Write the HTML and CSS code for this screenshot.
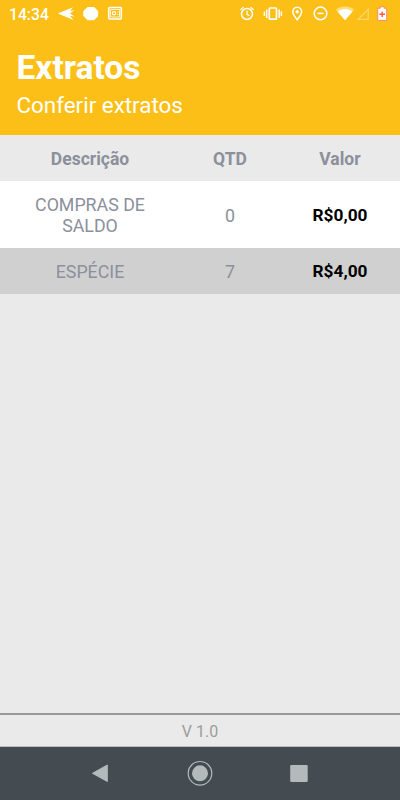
FILE: index.html
```html
<!DOCTYPE html>
<html lang="pt-BR">
<head>
<meta charset="utf-8">
<title>Extratos</title>
<link rel="stylesheet" href="styles.css">
</head>
<body>
<div class="app">
  <header class="header">
    <div class="status">
      <span class="clock">14:34</span>
      <svg class="status-icons" width="80" height="28" viewBox="50 0 80 28" fill="#fff">
        <path d="M57.800 13.500 73 7.200l-3 4 4.500-1.200-4.500 3.500 4.500 3-4.500-.8 3.500 4.200z"/>
        <path d="M87.500 7.500h6.500l3.700 3.500v5l-3.700 3.700h-6.500L83.800 16v-5z" stroke="#fff" stroke-linejoin="round"/>
        <g fill="none" stroke="#fff">
          <rect x="108.700" y="7.500" width="12.600" height="11.500" rx="1" stroke-width="1.600"/>
          <path d="M110.500 9.500h9v7.500h-9z" stroke-width=".8"/>
          <circle cx="114" cy="13.200" r="1.600" stroke-width="1.200"/>
          <path d="M117.700 11.500v1M117.700 14v1"/>
        </g>
      </svg>
      <svg class="status-icons right" width="170" height="28" viewBox="230 0 170 28" fill="none" stroke="#fff" stroke-width="1.500">
        <circle cx="247" cy="14" r="5.500"/>
        <path d="M247 10.800v3.500l2.500 1.500M240.500 9.800l3-2.600M253.500 9.800l-3-2.600" stroke-width="1.300"/>
        <rect x="269.300" y="8" width="7.200" height="11.200" rx=".8" stroke-width="1.700"/>
        <path d="M266.700 9.500v8.500M279.200 9.500v8.500M264.400 11.500v4.500M281.400 11.500v4.500" stroke-width="1.500"/>
        <path d="M297.200 19.800c-2.500-3.100-4.400-5.400-4.400-8.200a4.400 4.400 0 0 1 8.800 0c0 2.800-1.900 5.100-4.400 8.200z"/>
        <circle cx="297.200" cy="11.700" r="1.700" fill="#fff" stroke="none"/>
        <circle cx="320.500" cy="13.400" r="6.300"/>
        <path d="M317.500 13.400h6"/>
        <g stroke="none">
          <path fill="#fddc7b" d="M335.800 9.800c5-4.300 13.400-4.300 18.400 0L345 20.300z"/>
          <path fill="#fff" d="M337.700 11.700c4-3.500 10.600-3.500 14.600 0L345 20.300z"/>
        </g>
        <path d="M368.200 9.300v10h-10z" stroke="#fdd66a" stroke-width="1.300"/>
        <path d="M380.300 6.700h3.800v1.500h2.600v12.200h-9V8.200h2.600z" fill="#fff" stroke="#ff8b6c" stroke-width="1"/>
        <path d="M382.200 11.500v5.600M379.400 14.300h5.600" stroke="#fa5b38" stroke-width="1.400"/>
      </svg>
    </div>
    <h1>Extratos</h1>
    <p class="subtitle">Conferir extratos</p>
  </header>
  <main>
    <div class="row head"><span>Descrição</span><span>QTD</span><span>Valor</span></div>
    <div class="row tall"><span>COMPRAS DE SALDO</span><span>0</span><strong>R$0,00</strong></div>
    <div class="row alt"><span>ESPÉCIE</span><span>7</span><strong>R$4,00</strong></div>
  </main>
  <footer class="version">V 1.0</footer>
  <nav class="navbar">
    <svg width="400" height="53" viewBox="0 747 400 53" fill="#b4b9bb">
      <path d="M92.500 773.300 107.300 765v16.500z" stroke="#b4b9bb" stroke-linejoin="round"/>
      <circle cx="200" cy="773.300" r="11.800" fill="none" stroke="#b4b9bb" stroke-width="1.200"/>
      <circle cx="200" cy="773.300" r="8"/>
      <rect x="290.200" y="765" width="17.500" height="17" rx="1.300"/>
    </svg>
  </nav>
</div>
</body>
</html>
```
FILE: styles.css
```css
* { box-sizing: border-box; }
body { margin: 0; font-family: Roboto, sans-serif; }
.app { display: flex; flex-direction: column; width: 400px; height: 800px; background: #eaeaea; }
.header { height: 135px; background: #fcbf17; color: #fff; }
.status { display: flex; height: 28px; padding-left: 9px; }
.clock { width: 41px; font-size: 15.700px; line-height: 29px; font-weight: 500; white-space: nowrap; }
.status-icons { display: block; flex: none; }
.right { margin-left: auto; }
h1 { margin: 20px 0 0 16.500px; font-size: 33.500px; line-height: 40px; font-weight: 700; }
.subtitle { margin: 2px 0 0 16.500px; font-size: 22.400px; line-height: 30px; }
main { flex: 1; }
.row { display: grid; grid-template-columns: 140px 100px 80px; column-gap: 20px; padding-left: 20px; align-items: center; height: 46px; font-size: 17.800px; line-height: 21px; text-align: center; color: #8b909b; font-weight: 400; }
.head { padding-top: 2px; font-size: 17.500px; font-weight: 700; }
.tall { height: 67px; padding-top: 1px; background: #fff; }
.alt { padding-top: 1px; background: #d0d0d0; }
strong { color: #000; font-size: 17.300px; font-weight: 700; }
.version { height: 34px; border-top: 2px solid #999; border-bottom: 1px solid #bbb; font-size: 16px; line-height: 33px; text-align: center; color: #9c9c9c; }
.navbar { height: 53px; background: #444c52; }
.navbar svg { display: block; }
```
